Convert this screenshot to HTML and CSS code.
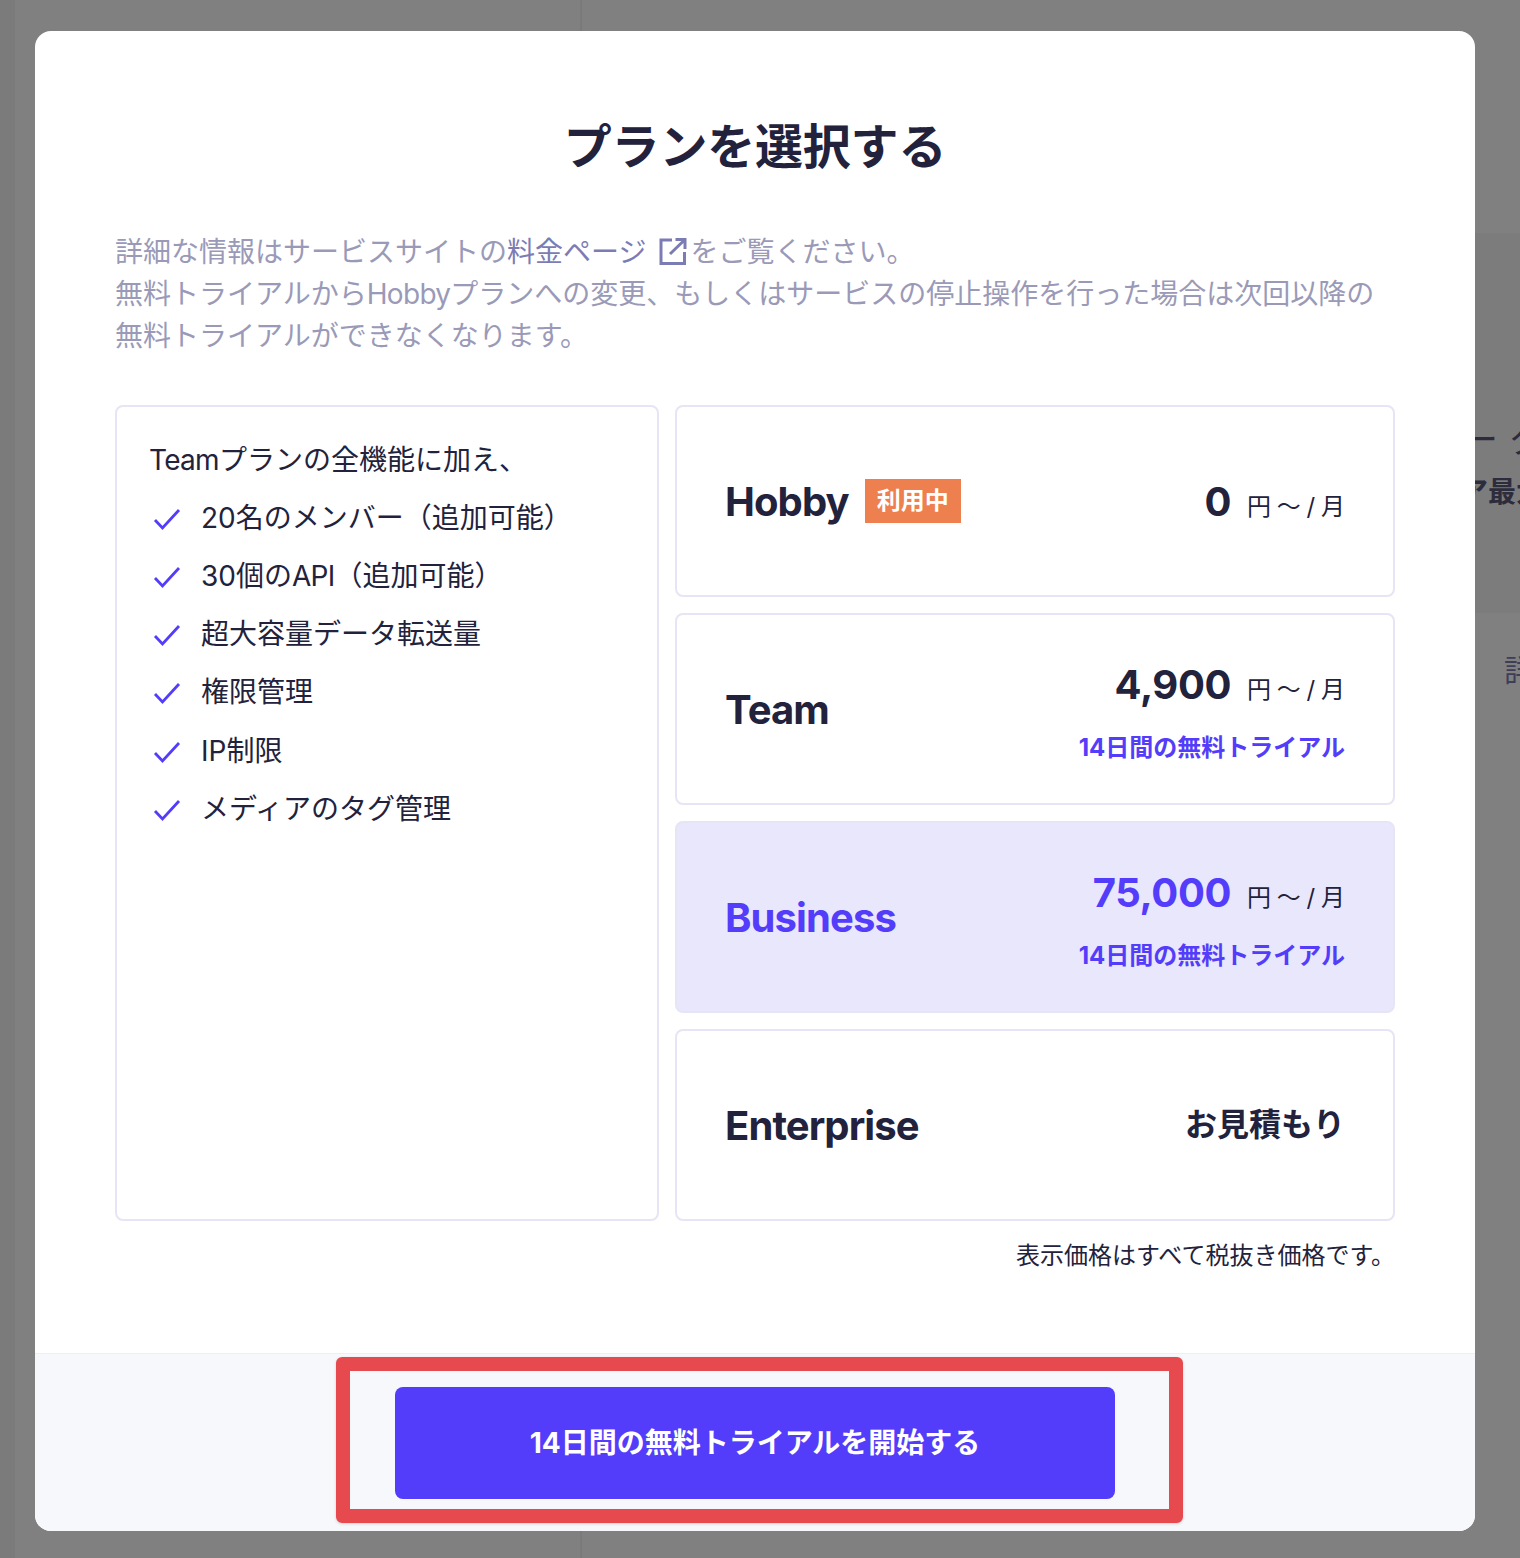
FILE: index.html
```html
<!DOCTYPE html>
<html lang="ja">

<head>
    <meta charset="UTF-8">
    <meta name="viewport" content="width=device-width, initial-scale=1.0">
    <title>プランを選択する</title>
    <link rel="stylesheet" href="styles.css">
</head>

<body>
    <div class="backdrop">
        <div class="bg-sidebar"></div>
        <div class="bg-divider"></div>
        <div class="bg-band"></div>
        <span class="bg-text bg-dash">ー ク</span>
        <span class="bg-text bg-bold">ア最大</span>
        <span class="bg-text bg-detail">詳</span>
    </div>

    <div class="modal">
        <div class="modal-body">
            <h1>プランを選択する</h1>
            <p class="intro">
                詳細な情報はサービスサイトの<a href="#" class="intro-link">料金ページ<svg class="external-icon" viewBox="0 0 28 28" fill="none" stroke="currentColor" stroke-width="3">
                        <path d="M13 3H2v23.500h23.500V15" />
                        <path d="M11 17L26 2.500M16.500 2.500h9.500v9.500" />
                    </svg></a>をご覧ください。<br>
                無料トライアルから<span class="latin">Hobby</span>プランへの変更、もしくはサービスの停止操作を行った場合は次回以降の<br>
                無料トライアルができなくなります。
            </p>

            <div class="plans">
                <div class="features">
                    <p class="features-title"><span class="latin">Team</span>プランの全機能に加え、</p>
                    <ul>
                        <li><svg class="check" viewBox="0 0 28 28"><path d="M2 15l7.500 8L26 5" /></svg><span>20名のメンバー（追加可能）</span></li>
                        <li><svg class="check" viewBox="0 0 28 28"><path d="M2 15l7.500 8L26 5" /></svg><span>30個の<span class="latin">API</span>（追加可能）</span></li>
                        <li><svg class="check" viewBox="0 0 28 28"><path d="M2 15l7.500 8L26 5" /></svg><span>超大容量データ転送量</span></li>
                        <li><svg class="check" viewBox="0 0 28 28"><path d="M2 15l7.500 8L26 5" /></svg><span>権限管理</span></li>
                        <li><svg class="check" viewBox="0 0 28 28"><path d="M2 15l7.500 8L26 5" /></svg><span>IP制限</span></li>
                        <li><svg class="check" viewBox="0 0 28 28"><path d="M2 15l7.500 8L26 5" /></svg><span>メディアのタグ管理</span></li>
                    </ul>
                </div>

                <div class="plan-list">
                    <div class="plan">
                        <div class="plan-name">Hobby<span class="badge">利用中</span></div>
                        <div class="plan-price">
                            <div class="price-row"><span class="price">0</span><span class="unit">円 ～ / 月</span></div>
                        </div>
                    </div>
                    <div class="plan">
                        <div class="plan-name">Team</div>
                        <div class="plan-price">
                            <div class="price-row"><span class="price">4,900</span><span class="unit">円 ～ / 月</span></div>
                            <div class="trial">14日間の無料トライアル</div>
                        </div>
                    </div>
                    <div class="plan plan-selected">
                        <div class="plan-name">Business</div>
                        <div class="plan-price">
                            <div class="price-row"><span class="price">75,000</span><span class="unit">円 ～ / 月</span></div>
                            <div class="trial">14日間の無料トライアル</div>
                        </div>
                    </div>
                    <div class="plan">
                        <div class="plan-name">Enterprise</div>
                        <div class="plan-price">
                            <div class="quote">お見積もり</div>
                        </div>
                    </div>
                </div>
            </div>

            <p class="tax-note">表示価格はすべて税抜き価格です。</p>
        </div>

        <div class="modal-footer">
            <button class="start-button">14日間の無料トライアルを開始する</button>
            <div class="highlight"></div>
        </div>
    </div>
</body>

</html>
```

FILE: styles.css
```css
* {
    box-sizing: border-box;
}

html,
body {
    margin: 0;
    height: 100%;
}

body {
    position: relative;
    height: 1558px;
    overflow: hidden;
    padding: 31px 45px 27px 35px;
    background-color: #808080;
    color: #22223c;
    font-family: Inter, "Noto Sans CJK JP", sans-serif;
}

/* dimmed page behind the modal */
.backdrop {
    position: absolute;
    inset: 0;
}

.bg-sidebar {
    position: absolute;
    left: 0;
    top: 0;
    width: 15px;
    height: 100%;
    background-color: #7b7b7b;
}

.bg-divider {
    position: absolute;
    left: 580px;
    top: 0;
    width: 2px;
    height: 100%;
    background-color: #7a7a7a;
}

.bg-band {
    position: absolute;
    left: 1475px;
    top: 233px;
    width: 45px;
    height: 380px;
    background-color: #7c7c7c;
}

.bg-text {
    position: absolute;
    color: #2c2c3c;
    white-space: nowrap;
}

.bg-dash {
    left: 1462px;
    top: 420px;
    font-size: 36px;
    line-height: 40px;
}

.bg-bold {
    left: 1460px;
    top: 474px;
    font-size: 28px;
    line-height: 36px;
    font-weight: 700;
}

.bg-detail {
    left: 1504px;
    top: 650px;
    font-size: 30px;
    line-height: 40px;
    color: #3e3e58;
}

.modal {
    position: relative;
    width: 1440px;
    height: 1500px;
    background-color: #fff;
    border-radius: 16px;
    overflow: hidden;
}

.modal-body {
    height: 1322px;
    padding: 80px 80px 0;
}

h1 {
    margin: 0;
    font-size: 48px;
    line-height: 72px;
    font-weight: 700;
    text-align: center;
    letter-spacing: -0.2px;
}

.intro {
    margin: 48px 0 0;
    font-size: 28px;
    line-height: 42px;
    color: #9a9ab8;
    white-space: nowrap;
}

.intro-link {
    color: #7c7cb4;
    text-decoration: none;
}

.external-icon {
    width: 28px;
    height: 28px;
    margin: 0 3px 0 13px;
    vertical-align: -3px;
}

.latin {
    letter-spacing: -0.7px;
}

.plans {
    display: flex;
    gap: 16px;
    margin-top: 48px;
}

.features {
    width: 544px;
    height: 816px;
    padding: 32px;
    border: 2px solid #e6e5f5;
    border-radius: 8px;
}

.features-title {
    margin: 0;
    font-size: 28px;
    line-height: 42px;
}

ul {
    list-style: none;
    margin: 14px 0 0;
    padding: 0;
}

li {
    display: flex;
    align-items: center;
    height: 42px;
    margin-bottom: 16.15px;
    font-size: 28px;
}

.check {
    flex: none;
    width: 28px;
    height: 28px;
    margin: 6px 20px 0 4px;
    fill: none;
    stroke: #533dfa;
    stroke-width: 2.8;
}

.plan-list {
    display: flex;
    flex-direction: column;
    gap: 16px;
    width: 720px;
}

.plan {
    display: flex;
    align-items: center;
    justify-content: space-between;
    height: 192px;
    padding: 0 48px;
    border: 2px solid #e6e5f5;
    border-radius: 8px;
}

.plan-selected {
    background-color: #e9e7fc;
    color: #533dfa;
}

.plan-name {
    display: flex;
    align-items: center;
    padding-top: 2px;
    font-size: 40px;
    line-height: 48px;
    font-weight: 700;
    letter-spacing: -0.9px;
}

.badge {
    margin-top: -2px;
    margin-left: 16px;
    padding: 0 12px;
    height: 44px;
    background-color: #ee7f4f;
    color: #fff;
    font-size: 24px;
    line-height: 44px;
    letter-spacing: 0;
}

.plan-price {
    display: flex;
    flex-direction: column;
    align-items: flex-end;
}

.price-row {
    display: flex;
    align-items: flex-start;
}

.price {
    margin-top: 2px;
    font-size: 40px;
    line-height: 60px;
    font-weight: 700;
    letter-spacing: -0.4px;
}

.unit {
    margin-left: 16px;
    margin-top: 19px;
    font-size: 24px;
    line-height: 36px;
    color: #22223c;
    white-space: pre;
    word-spacing: -1px;
}

.trial {
    margin-top: 15px;
    font-size: 24px;
    line-height: 36px;
    font-weight: 700;
    color: #533dfa;
}

.quote {
    font-size: 32px;
    line-height: 48px;
    font-weight: 700;
}

.tax-note {
    margin: 17px 0 0;
    font-size: 24px;
    line-height: 36px;
    text-align: right;
}

.modal-footer {
    position: relative;
    display: flex;
    justify-content: center;
    height: 178px;
    padding-top: 33px;
    background-color: #f7f8fc;
    border-top: 1px solid #eeeef6;
}

.start-button {
    width: 720px;
    height: 112px;
    padding: 0 0 4px;
    background-color: #533dfa;
    color: #fff;
    border: none;
    border-radius: 8px;
    font-family: inherit;
    font-size: 28px;
    font-weight: 700;
}

/* red annotation frame drawn over the button */
.highlight {
    position: absolute;
    left: 301px;
    top: 3px;
    width: 847px;
    height: 166px;
    border: 14px solid #e64a4f;
    border-radius: 6px;
    box-shadow: 0 1px 3px rgba(0, 0, 0, 0.15);
}
```
